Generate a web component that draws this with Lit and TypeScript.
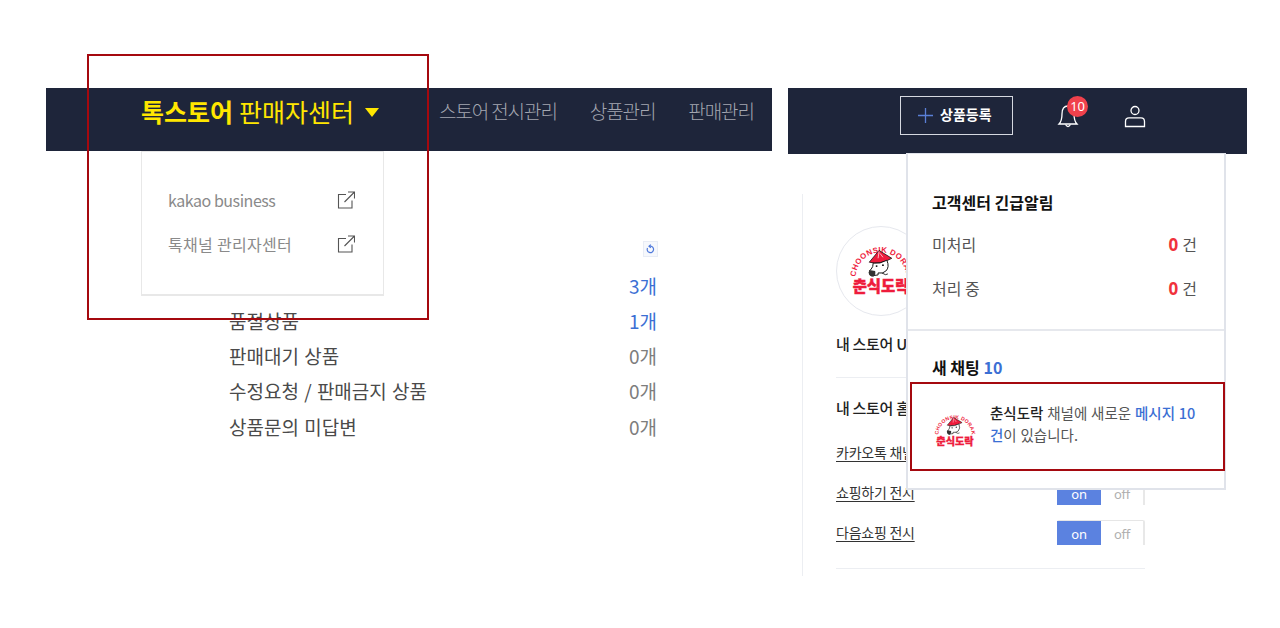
import { LitElement, html, css, svg } from "lit";
import { customElement } from "lit/decorators.js";

const logo = (id: string) => html`<svg class="logo-svg" viewBox="0 0 90 90" aria-label="춘식도락">
  <defs><path id=${id} d="M19 52 A26 26 0 1 1 71 52"></path></defs>
  <text class="logo-arc"><textPath href="#${id}" startOffset="50%" text-anchor="middle">CHOONSIK DORAK</textPath></text>
  ${svg`<path d="M43 24 L33 36 Q44 39 56 32 Z" fill="#ee1c3c" stroke="#111" stroke-width=".8"/>
  <path d="M43 25 L42 32 M44 27 L47 31" stroke="#fff" stroke-width=".7" fill="none"/>
  <path d="M37 37 Q44 38 51 34 Q54 41 50 45 Q47 48 42 47 L42 49 L35 50 Q31 46 35 43 Q37 41 37 37Z" fill="#fff" stroke="#111" stroke-width="1"/>
  <circle cx="40.5" cy="40" r="1" fill="#111"/><circle cx="47" cy="39" r="1" fill="#111"/>
  <path d="M33 44 Q31 50 37 51 Q40 49 39 45 Z" fill="#333"/>
  <path d="M46 47 Q50 50 52 48" stroke="#111" fill="none" stroke-width=".9"/>`}
  <text class="logo-name" x="45" y="66" text-anchor="middle" textLength="58" lengthAdjust="spacingAndGlyphs">춘식도락</text>
</svg>`;

const extIcon = () => svg`<svg class="ext" viewBox="0 0 18 18" fill="none" stroke="#555" stroke-width="1.1">
  <path d="M9 3.5 H1.5 V17 H15 V9.5"/><path d="M7.5 11 L17 1.5 M11 1 H17.5 V7.5"/></svg>`;

@customElement("app-root")
export class AppRoot extends LitElement {
  static styles = css`
    :host { display: block; font-family: "Noto Sans CJK KR", "Noto Sans", sans-serif; }
    * { box-sizing: border-box; }
    .stage { position: relative; width: 1280px; height: 628px; overflow: hidden; background: #fff;
      display: flex; gap: 16px; padding: 88px 0 0 46px; }
    .left { width: 726px; position: relative; }
    .right { width: 459px; position: relative; }
    .bar { background: #1e253a; display: flex; align-items: center; }
    .left .bar { height: 63px; padding: 0 0 17px 95px; }
    .right .bar { height: 66px; padding: 0 0 12px 112px; }
    .brand { color: #ffe600; font-size: 25px; line-height: 1; width: 299px; flex: none; display: flex; align-items: center; }
    .brand b { font-weight: 700; margin-right: 6px; }
    .brand span { font-weight: 400; }
    .caret { width: 0; height: 0; border: 7px solid transparent; border-top: 9px solid #ffe600; border-bottom: 0; margin: 3px 0 0 11px; }
    .nav { display: flex; gap: 33px; color: #a4a7b1; font-size: 19px; letter-spacing: -1.1px; font-weight: 300; white-space: nowrap; margin: 0 0 2px -1px; }
    .add { width: 113px; height: 39px; flex: none; border: 1px solid #d5d8e0; display: flex; align-items: center; padding-left: 17px; gap: 7px; color: #fff; font-size: 14px; font-weight: 700; letter-spacing: 0; }
    .add svg { width: 15px; height: 15px; margin-top: 1px; }
    .add span { margin-top: -3px; }
    .bell { position: relative; width: 24px; height: 28px; margin-left: 43px; }
    .bell svg { width: 24px; height: 28px; display: block; }
    .badge { position: absolute; left: 11px; top: -5px; width: 21px; height: 21px; border-radius: 50%; background: #f0414c; color: #fff; font-size: 13px; line-height: 20px; text-align: center; font-family: "Noto Sans", sans-serif; letter-spacing: -.3px; }
    .user { width: 22px; height: 24px; margin-left: 44px; margin-top: 3px; }
    .list { margin: 0 0 0 183px; padding: 116.5px 0 0; width: 428px; list-style: none; color: #4a4a4a; font-size: 19px; word-spacing: 1px; }
    .list li { display: flex; justify-content: space-between; height: 35.3px; line-height: 35.3px; font-weight: 400; }
    .refresh-row { display: flex; justify-content: flex-end; position: absolute; top: 153px; left: 597px; }
    .refresh { width: 15px; height: 16px; border: 1px solid #e8ecf5; background: #f6f8fc; display: block; }
    .refresh svg { display: block; width: 13px; height: 14px; }
    .blue { color: #3b6fd4; }
    .count { color: #7d7d7d; }
    .list .blue { color: #3b6fd4; }
    .side { margin: 40px 0 0 14px; height: 382px; border-left: 1px solid #eceef2; padding: 32px 0 0 33px; width: 344px; }
    .avatar { width: 90px; height: 90px; border-radius: 50%; border: 1px solid #e6e8ee; }
    .logo-svg { display: block; width: 100%; height: 100%; overflow: visible; }
    .logo-arc { font: 700 8px "Liberation Sans", sans-serif; fill: #ee1c3c; letter-spacing: .3px; }
    .logo-name { font: 900 16px "Noto Sans CJK KR", sans-serif; fill: #ee1c3c; stroke: #ee1c3c; stroke-width: .5px; }
    .store-url { font-size: 15px; font-weight: 500; color: #222; margin-top: 18px; line-height: 20px; letter-spacing: -.3px; white-space: nowrap; }
    .rule { height: 1px; background: #eceef2; width: 309px; }
    .store-url + .rule { margin-top: 23px; }
    .store-home { font-size: 15px; font-weight: 500; color: #222; margin-top: 20px; line-height: 20px; letter-spacing: -.3px; }
    .setting { display: flex; justify-content: space-between; width: 309px; height: 40px; align-items: center; font-size: 14px; color: #333; letter-spacing: -.25px; }
    .settings { margin-top: 14px; }
    .setting u { text-underline-offset: 3px; }
    .toggle { display: flex; width: 88px; height: 25px; font-size: 13px; line-height: 26px; text-align: center; font-family: "Noto Sans", sans-serif; border-top: 1px solid #e6e6e6; border-right: 2px solid #e8e8e8; border-radius: 2px 2px 0 0; }
    .on { width: 44px; background: #5b82e0; color: #fff; }
    .off { flex: 1; color: #b0b0b0; }
    .side .last { margin-top: 16px; }
    .dropdown { position: absolute; left: 95px; top: 63px; width: 243px; height: 145px; background: #fff; border: 1px solid #e8e8e8; border-bottom-width: 2px; padding: 26px 28px 0 26px; }
    .dropdown div { display: flex; justify-content: space-between; align-items: center; height: 44px; color: #8a8a8a; font-size: 16px; font-weight: 400; }
    .d-en { letter-spacing: -.45px; }
    .d-ko { letter-spacing: .3px; }
    .ext { width: 18px; height: 18px; flex: none; }
    .panel { position: absolute; left: 118px; top: 65px; width: 320px; height: 337px; background: #fff; border: 2px solid #e0e3ea; border-top-width: 1px; }
    .p-sec { padding: 36px 27px 0 24px; height: 177px; border-bottom: 2px solid #e6e8ed; }
    .p-title { font-size: 16px; font-weight: 700; color: #111; line-height: 24px; white-space: nowrap; }
    .p-row { display: flex; justify-content: space-between; color: #555; font-size: 16px; line-height: 24px; height: 44px; padding-top: 18px; }
    .p-row b { color: #f0323c; font-weight: 700; font-size: 17px; margin-right: 4px; font-family: "Noto Sans", sans-serif; }
    .p-new { padding: 24px 0 0 24px; }
    .p-msg { display: flex; gap: 6px; padding: 23px 25px 0 18px; }
    .p-logo { width: 58px; height: 58px; flex: none; }
    .p-text { font-size: 14.5px; line-height: 22px; color: #555; width: 212px; word-spacing: .6px; }
    .p-text strong { color: #222; font-weight: 500; }
    .p-text .blue { font-weight: 500; }
    .mark { position: absolute; border: 2px solid #a5090f; pointer-events: none; }
    .mark-a { left: 87px; top: 54px; width: 342px; height: 266px; }
    .mark-b { left: 910px; top: 382px; width: 315px; height: 89px; }
  `;

  render() {
    return html`<div class="stage">
      <section class="left">
        <header class="bar">
          <div class="brand"><b>톡스토어</b><span>판매자센터</span><i class="caret"></i></div>
          <nav class="nav"><span>스토어 전시관리</span><span>상품관리</span><span>판매관리</span></nav>
        </header>
        <div class="refresh-row"><span class="refresh">
          <svg viewBox="0 0 13 14" fill="none" stroke="#4f79dc" stroke-width="1.2"><path d="M3.5 6 A3.2 3.2 0 1 0 6.5 4.2 H5.5"/><path d="M6.8 2.6 L5 4.2 L6.8 5.8"/></svg>
        </span></div>
        <ul class="list">
          <li><span>판매중 상품</span><span class="blue">3개</span></li>
          <li><span>품절상품</span><span class="blue">1개</span></li>
          <li><span>판매대기 상품</span><span class="count">0개</span></li>
          <li><span>수정요청 / 판매금지 상품</span><span class="count">0개</span></li>
          <li><span>상품문의 미답변</span><span class="count">0개</span></li>
        </ul>
        <div class="dropdown">
          <div><span class="d-en">kakao business</span>${extIcon()}</div>
          <div><span class="d-ko">톡채널 관리자센터</span>${extIcon()}</div>
        </div>
      </section>
      <section class="right">
        <header class="bar">
          <div class="add">
            <svg viewBox="0 0 15 15" stroke="#5a7fd6" stroke-width="1.3"><path d="M7.5 0V15M0 7.5H15"/></svg>
            <span>상품등록</span>
          </div>
          <div class="bell">
            <svg viewBox="0 0 24 28" fill="none" stroke="#fff" stroke-width="1.3"><path d="M3 23 Q6 20 6 13 Q6 5 12 5 Q18 5 18 13 Q18 20 21 23 Z"/><path d="M9.5 23.5 Q12 27.5 14.5 23.5"/></svg>
            <span class="badge">10</span>
          </div>
          <svg class="user" viewBox="0 0 22 24" fill="none" stroke="#fff" stroke-width="1.3"><circle cx="11" cy="5.5" r="4"/><path d="M1.5 21.5 V16.5 Q1.5 12.8 5 12.8 H17 Q20.5 12.8 20.5 16.5 V21.5 Z"/></svg>
        </header>
        <div class="side">
          <div class="avatar">${logo("arc-a")}</div>
          <div class="store-url">내 스토어 URL</div>
          <div class="rule"></div>
          <div class="store-home">내 스토어 홈</div>
          <div class="settings">
            <div class="setting"><u>카카오톡 채널</u><span class="toggle"><span class="on">on</span><span class="off">off</span></span></div>
            <div class="setting"><u>쇼핑하기 전시</u><span class="toggle"><span class="on">on</span><span class="off">off</span></span></div>
            <div class="setting"><u>다음쇼핑 전시</u><span class="toggle"><span class="on">on</span><span class="off">off</span></span></div>
          </div>
          <div class="rule last"></div>
        </div>
        <aside class="panel">
          <div class="p-sec">
            <div class="p-title">고객센터 긴급알림</div>
            <div class="p-row"><span>미처리</span><span><b>0</b>건</span></div>
            <div class="p-row"><span>처리 중</span><span><b>0</b>건</span></div>
          </div>
          <div class="p-new p-title">새 채팅 <span class="blue">10</span></div>
          <div class="p-msg">
            <div class="p-logo">${logo("arc-b")}</div>
            <div class="p-text"><strong>춘식도락</strong> 채널에 새로운 <span class="blue">메시지 10 건</span>이 있습니다.</div>
          </div>
        </aside>
      </section>
      <div class="mark mark-a"></div>
      <div class="mark mark-b"></div>
    </div>`;
  }
}
